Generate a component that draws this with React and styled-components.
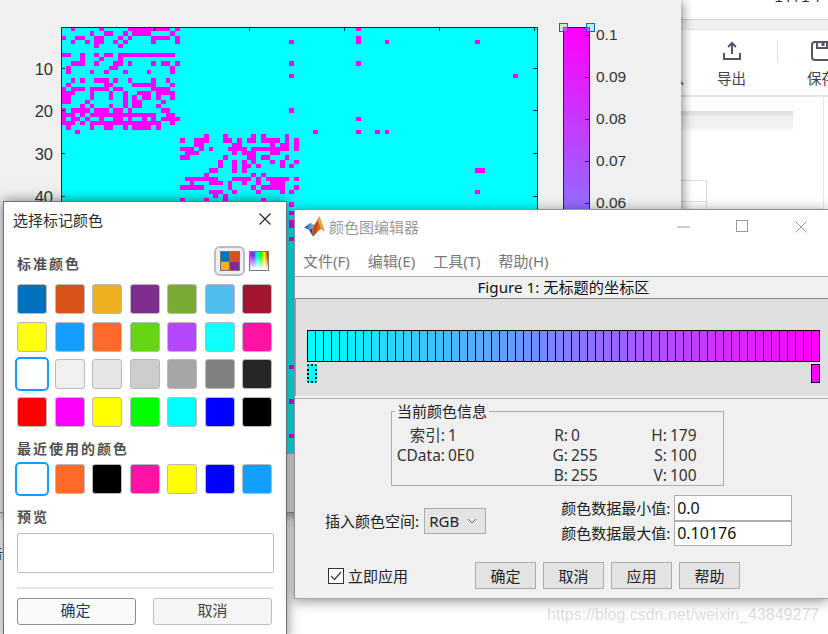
import React from "react";
import styled, { createGlobalStyle } from "styled-components";

const UI_FONT = `"Noto Sans", "Noto Sans CJK SC", sans-serif`;
const CJK_FONT = `"Noto Sans CJK SC", "Noto Sans", sans-serif`;

const GlobalStyle = createGlobalStyle`
  html, body {
    margin: 0;
    padding: 0;
    background: #fff;
  }
  * {
    box-sizing: border-box;
  }
`;

/* row number -> magenta columns of the sparse matrix */
const MATRIX = {
  1: "2 8 14-22 24 62",
  2: "6 9-10 13 15-18 23",
  3: "0 3-4 7-8 12 14 19-22 24 62",
  4: "2 5 7-8 11 13 19 24 48 62 68 87",
  5: "7 12",
  7: "0-1 4 7 9-10 12-23",
  8: "4 8 12",
  9: "2-4 7 11-12 14 19 21-22 24 48 62",
  10: "1 10-11 23",
  11: "1 6 9 13 18 23",
  12: "48 95",
  13: "2 4 7-9 11 14 19 22",
  14: "1 9-10 15-19 23",
  15: "0 2-4 6-9 11-12 19-22",
  16: "0-2 6 10 13 16-18 20-23",
  17: "0-1 6 10 13 15 17-18 20 23",
  18: "0-1 5 13 15-16 21",
  19: "4 6 10 13 15-16 20",
  20: "0 2-5 7-9 11-12 14 21-22 48",
  21: "0-2 4 6-19 22-23",
  22: "0 2-3 5 8 11-12 14 17 19 21-24 62",
  23: "0-2 4 6-20 23",
  24: "1 6 9-10 13 15-18 20",
  25: "3 53 62 66 68",
  26: "30 34 40 42 47",
  27: "25 28-30 34-35 37 39-40 42-45 47 49",
  28: "28-29 36-37 44 46-47 49",
  29: "25-27 29 31 35-38 40-47 49",
  30: "26-28 36 38-40 44-45",
  31: "25-26 34 39-40 42-43 47",
  32: "33 36 38 40 44 46 49",
  33: "33 36 38-39 41 46 48",
  34: "31-32 36 38 87-88",
  35: "30 40 42",
  36: "26-32 36-39 41 43-47 49",
  37: "27 31-33 35 38 41 44-46",
  38: "25-29 35 40 42-46 49",
  39: "31-33 36 41 46 48 87",
  40: "32 34",
  41: "25 30 34 42",
  42: "48",
  44: "48",
  46: "48",
  47: "48",
  50: "48",
  80: "48",
  88: "48",
  96: "48",
};

const CELL_W = 4.76;
const CELL_H = 4.28;
const PLOT_X = 61;
const PLOT_Y = 27;

const matrixCells = Object.entries(MATRIX).flatMap(([row, spec]) =>
  spec.split(" ").map((part) => {
    const [from, to = from] = part.split("-").map(Number);
    return { row: Number(row), from, span: to - from + 1 };
  })
);

const STANDARD_COLORS = [
  "#0072bd", "#d95319", "#edb120", "#7e2f8e", "#77ac30", "#4dbeee", "#a2142f",
  "#ffff11", "#139fff", "#ff6929", "#64d413", "#b746ff", "#0fffff", "#ff13a6",
  "#ffffff", "#f0f0f0", "#e6e6e6", "#cccccc", "#a6a6a6", "#808080", "#262626",
  "#ff0000", "#ff00ff", "#ffff00", "#00ff00", "#00ffff", "#0000ff", "#000000",
];
const RECENT_COLORS = ["#ffffff", "#ff6929", "#000000", "#ff13a6", "#ffff00", "#0000ff", "#139fff"];

const MAP_SIZE = 64;
const mapColor = (i) => {
  const t = i / (MAP_SIZE - 1);
  return `rgb(${Math.round(255 * t)}, ${Math.round(255 * (1 - t))}, 255)`;
};

const INFO_ROWS = [
  ["索引:", "1", "R:", "0", "H:", "179"],
  ["CData:", "0E0", "G:", "255", "S:", "100"],
  ["", "", "B:", "255", "V:", "100"],
];

const Desktop = styled.div`
  position: relative;
  width: 828px;
  height: 634px;
  overflow: hidden;
  background: #fff;
  font-family: ${UI_FONT};
`;

/* application behind the figure */
const BackApp = styled.div`
  position: absolute;
  left: 640px;
  top: 0;
  width: 188px;
  height: 634px;
  background: #fff;
  font-family: ${CJK_FONT};
`;

const TopStrip = styled.div`
  height: 20px;
  overflow: hidden;
  border-bottom: 1px solid #cfcfcf;
  text-align: right;
  padding-right: 6px;
  font: 15px "Liberation Sans", sans-serif;
  letter-spacing: 2px;
  color: #333;
  line-height: 1;

  span {
    display: block;
    margin-top: -11px;
  }
`;

const GreyBand = styled.div`
  height: 10px;
  background: #f1f1f1;
  border-bottom: 1px solid #e3e3e3;
`;

const Toolbar = styled.div`
  height: 67px;
  display: flex;
  border-bottom: 2px solid #e6e6e6;
`;

const ToolItem = styled.div`
  width: ${(p) => p.$width}px;
  margin-left: ${(p) => p.$offset || 0}px;
  flex: none;
  display: flex;
  flex-direction: column;
  align-items: center;
  justify-content: flex-end;
  height: 58px;
  color: #444;
  font-size: 14.5px;
  line-height: 20px;
  white-space: nowrap;

  svg {
    display: block;
    margin-bottom: 7px;
  }
`;

const ToolDivider = styled.div`
  width: 1px;
  height: 22px;
  margin-top: 10px;
  margin-left: 14px;
  margin-right: 14px;
  flex: none;
  background: #dedede;
`;

const BackContent = styled.div`
  width: 184px;
  height: 112px;
  border-right: 1px solid #e6e6e6;
  padding-top: 14px;
`;

const HeaderBar = styled.div`
  width: 153px;
  height: 20px;
  background: linear-gradient(#dfdfdf 0, #dfdfdf 15%, #f0f0f0 30%, #f0f0f0 70%, #fafafa 100%);
`;

const TableStub = styled.div`
  width: 67px;
  height: 40px;
  margin-top: 49px;
  border: 1px solid #dcdcdc;
  border-left: none;

  &::after {
    content: "";
    display: block;
    height: 20px;
    border-bottom: 1px solid #e2e2e2;
  }
`;

const CutGlyph = styled.div`
  position: absolute;
  left: -11px;
  top: 542px;
  font: 14px ${CJK_FONT};
  color: #333;
`;

/* MATLAB figure */
const FigureWindow = styled.div`
  position: absolute;
  left: 0;
  top: 0;
  width: 681px;
  height: 513px;
  background: #f0f0f0;
  border-bottom: 1px solid #9a9a9a;
  box-shadow: 2px 2px 10px rgba(0, 0, 0, 0.45);
`;

const FigureCanvas = styled.svg`
  display: block;

  text {
    font-family: "Liberation Sans", sans-serif;
    fill: #333;
  }
`;

/* marker colour dialog */
const Dialog = styled.div`
  position: absolute;
  left: 3px;
  top: 201px;
  width: 284px;
  height: 440px;
  background: #fff;
  border: 1px solid #6c7474;
  box-shadow: 0 0 12px rgba(0, 0, 0, 0.5);
  font-family: ${CJK_FONT};
  color: #333;
`;

const DialogTitleBar = styled.div`
  height: 38px;
  display: flex;
  align-items: center;
  justify-content: space-between;
  padding: 0 15px 4px 9px;
  font-size: 15px;
  color: #2c2c2c;
`;

const DialogBody = styled.div`
  padding-left: 13px;
`;

const SectionHead = styled.div`
  width: 255px;
  height: 30px;
  margin-top: 6px;
  padding-right: 3px;
  display: flex;
  align-items: flex-start;
  justify-content: space-between;
`;

const SectionLabel = styled.div`
  height: 20px;
  margin-top: ${(p) => p.$top || 0}px;
  line-height: 19px;
  font-size: 14px;
  font-weight: 700;
  letter-spacing: 2px;
  color: #505050;
  white-space: nowrap;
`;

const HeadLabel = styled(SectionLabel)`
  margin-top: 8px;
`;

const ModeGroup = styled.div`
  display: flex;
  align-items: center;
  gap: 4px;
`;

const ModeToggle = styled.div`
  width: 31px;
  height: 30px;
  display: flex;
  align-items: center;
  justify-content: center;
  border: 2px solid ${(p) => (p.$active ? "#bdbdbd" : "transparent")};
  background: ${(p) => (p.$active ? "#efefef" : "transparent")};
  border-radius: 6px;
`;

const PaletteIcon = styled.div`
  width: 20px;
  height: 20px;
  display: grid;
  grid-template-columns: 1fr 1fr;
  gap: 1px;
  border: 1px solid #777;
  background: #777;
`;

const PaletteQuad = styled.div`
  background: ${(p) => p.$color};
`;

const SpectrumIcon = styled.div`
  width: 20px;
  height: 20px;
  border: 1px solid #777;
  background: linear-gradient(rgba(255, 255, 255, 0) 20%, #fff 95%),
    linear-gradient(90deg, #f0f, #44f, #0ff, #0f0, #ff0, #f00);
`;

const SwatchGrid = styled.div`
  width: 255px;
  margin-top: ${(p) => p.$top}px;
  display: grid;
  grid-template-columns: repeat(7, 30px);
  grid-auto-rows: 30px;
  justify-content: space-between;
  row-gap: 7.6px;
`;

const Swatch = styled.div`
  background: ${(p) => p.$color};
  border: ${(p) => (p.$selected ? "none" : "1.5px solid #b9b9b9")};
  border-radius: 3px;
  outline: ${(p) => (p.$selected ? "2px solid #129cff" : "none")};
`;

const PreviewBox = styled.div`
  width: 257px;
  height: 40px;
  margin-top: 6px;
  background: #fff;
  border: 1.5px solid #bcbcbc;
  border-radius: 2px;
`;

const DialogDivider = styled.div`
  width: 257px;
  height: 2px;
  margin-top: 14px;
  background: #e6e6e6;
`;

const DialogActions = styled.div`
  width: 255px;
  margin-top: 9px;
  display: flex;
  gap: 17px;
`;

const DialogButton = styled.div`
  width: 119px;
  height: 27px;
  padding: 0 ${(p) => (p.$primary ? 2 : 0)}px 3px 0;
  display: flex;
  align-items: center;
  justify-content: center;
  border: 1.5px solid ${(p) => (p.$primary ? "#8e8e8e" : "#bcbcbc")};
  border-radius: 3px;
  background: ${(p) => (p.$primary ? "#fafafa" : "#f5f5f5")};
  color: ${(p) => (p.$primary ? "#1d3a63" : "#444")};
  font-size: 15px;
`;

/* colormap editor */
const EditorWindow = styled.div`
  position: absolute;
  left: 294px;
  top: 209px;
  width: 534px;
  height: 390px;
  background: #f0f0f0;
  border: 1px solid #8a9494;
  border-right: none;
  border-bottom-color: #a8a8a8;
  box-shadow: 0 2px 12px rgba(0, 0, 0, 0.45);
  color: #1a1a1a;
  font-size: 14px;
`;

const EditorTitleBar = styled.div`
  height: 38px;
  display: flex;
  align-items: center;
  padding: 0 0 5px 9px;
  background: #fff;
  font-family: ${CJK_FONT};
  font-size: 15px;
  color: #9a9a9a;
`;

const EditorTitle = styled.span`
  margin-left: 4px;
`;

const WindowControls = styled.div`
  margin-left: auto;
  margin-right: -2px;
  display: flex;
`;

const WindowControl = styled.div`
  width: 58.5px;
  height: 30px;
  display: flex;
  align-items: center;
  justify-content: center;
`;

const MenuBar = styled.div`
  height: 29px;
  display: flex;
  align-items: center;
  gap: 18px;
  padding: 0 0 3px 8px;
  background: #fff;
  border-bottom: 1px solid #ababab;
  color: #777;
  font-size: 15px;
  white-space: nowrap;
`;

const AxesName = styled.div`
  height: 22px;
  line-height: 20px;
  padding-left: 4px;
  text-align: center;
  border-bottom: 1px solid #8a8a8a;
  font-size: 15.2px;
  color: #111;
`;

const MapPanel = styled.div`
  height: 97px;
  padding: 31px 0 0 11px;
  background: #dfdfdf;
  border-left: 1px solid #9a9a9a;
`;

const MapStrip = styled.div`
  width: 513px;
  height: 32px;
  display: flex;
  border: 1px solid #000;
  border-left-width: 0;
  background: #000;
`;

const MapCell = styled.div`
  flex: 1;
  border-left: 1px solid #000;
`;

const MarkerRow = styled.div`
  width: 513px;
  margin-top: 2px;
  display: flex;
  justify-content: space-between;
`;

const Marker = styled.div`
  width: ${(p) => (p.$selected ? 10 : 9)}px;
  height: 19px;
  background: ${(p) => p.$color};
  border: ${(p) => (p.$selected ? "2px dotted #111" : "1px solid #000")};
  border-radius: ${(p) => (p.$selected ? "2px" : "0")};
`;

const PanelRule = styled.div`
  height: 1px;
  margin-top: 2px;
  background: #ababab;
`;

const InfoGroup = styled.fieldset`
  width: 333px;
  height: 84px;
  margin: 3px 0 0 96px;
  padding: 0;
  border: 1px solid #ababab;
`;

const InfoLegend = styled.legend`
  margin-left: 3px;
  padding: 0 2px;
  font-size: 15px;
  line-height: 18px;
  font-family: ${CJK_FONT};
  color: #222;
`;

const InfoGrid = styled.div`
  display: grid;
  grid-template-columns: 53px 99px 18px 75px 18px auto;
  grid-auto-rows: 20px;
  column-gap: 3px;
  padding-top: 5px;
  line-height: 20px;
  font-size: 15.5px;
  color: #333;
`;

const InfoLabel = styled.div`
  display: flex;
  justify-content: flex-end;
  white-space: nowrap;
`;

const LimitsRow = styled.div`
  margin-top: 9px;
  padding-left: 30px;
  display: flex;
  align-items: center;
  font-family: ${CJK_FONT};
`;

const FieldLabel = styled.div`
  white-space: nowrap;
  font-size: 15px;
  line-height: 20px;
  color: #222;
`;

const SpaceSelect = styled.div`
  width: 62px;
  height: 26px;
  margin-left: 5px;
  padding: 0 8px 0 4px;
  display: flex;
  align-items: center;
  justify-content: space-between;
  background: #e4e4e4;
  border: 1px solid #adadad;
  font-family: ${UI_FONT};
  font-size: 15px;
  color: #222;
`;

const LimitsGrid = styled.div`
  margin-left: 75px;
  display: grid;
  grid-template-columns: 109px 118px;
  grid-auto-rows: 25.5px;
  column-gap: 4px;
  align-items: center;
`;

const LimitInput = styled.input`
  width: 118px;
  height: 25.5px;
  padding: 0 2px;
  border: 1px solid #adadad;
  background: #fff;
  font-family: ${UI_FONT};
  font-size: 16px;
  color: #111;
  outline: none;
`;

const ActionRow = styled.div`
  margin-top: 16px;
  padding-left: 33px;
  display: flex;
  align-items: center;
  font-family: ${CJK_FONT};
`;

const ApplyCheck = styled.div`
  width: 147px;
  display: flex;
  align-items: center;
  gap: 4px;
  font-size: 15px;
  color: #222;
`;

const CheckBox = styled.div`
  width: 16px;
  height: 16px;
  border: 1px solid #333;
  background: #fff;
  display: flex;
  align-items: center;
  justify-content: center;
`;

const ActionButtons = styled.div`
  display: flex;
  gap: 7px;
`;

const ActionButton = styled.div`
  width: 61px;
  height: 27px;
  padding-bottom: 1px;
  display: flex;
  align-items: center;
  justify-content: center;
  background: #e3e3e3;
  border: 1px solid #adadad;
  font-size: 15px;
  color: #222;
`;

const Watermark = styled.div`
  position: absolute;
  left: 547px;
  top: 605px;
  font: 16px/20px "Liberation Sans", sans-serif;
  color: rgba(170, 170, 170, 0.42);
  white-space: nowrap;
`;

const ExportIcon = () => (
  <svg width="20" height="20" viewBox="0 0 20 20" fill="none" stroke="#555566" strokeWidth="2">
    <path d="M10 13V2M6 6l4-4 4 4" />
    <path d="M2 12v6h16v-6" />
    <path d="M12 15.5h4" stroke="#fff" strokeDasharray="1 1" />
  </svg>
);

const SaveIcon = () => (
  <svg width="22" height="20" viewBox="0 0 22 20" fill="none" stroke="#555566" strokeWidth="2">
    <rect x="1" y="1" width="20" height="18" rx="3" />
    <path d="M6 1v6h10V1" />
    <path d="M12 2v3" strokeWidth="3" />
  </svg>
);

const MatlabLogo = () => (
  <svg width="21" height="21" viewBox="0 0 21 21">
    <path d="M0 11.5 6.5 7 10 9.5 5 14z" fill="#2f6fb0" />
    <path d="M6.5 7l3.5 2.5L8 12.5 5 14l-1-1z" fill="#5aa5d8" />
    <path d="M5 14l3.5 -2L9 20.5z" fill="#1d4f86" />
    <path d="M10 9.5 15.5 0.5 20.5 15.5 17 13 13 16 9 20.5 8 12.5z" fill="#d9601c" />
    <path d="M15.5 0.5 20.5 15.5 17 13 14 5z" fill="#f0a040" />
    <path d="M10 9.5 14 5l-1 11-4 4.5z" fill="#c2481a" />
  </svg>
);

const CloseGlyph = ({ size, color, width }) => (
  <svg width={size} height={size} viewBox="0 0 12 12" stroke={color} strokeWidth={width} fill="none">
    <path d="M0.5 0.5 11.5 11.5M11.5 0.5 0.5 11.5" />
  </svg>
);

const Figure = () => (
  <FigureCanvas width="681" height="513">
    <defs>
      <linearGradient id="cbar" x1="0" y1="0" x2="0" y2="1">
        <stop offset="0" stopColor="#ff00ff" />
        <stop offset="1" stopColor="#00ffff" />
      </linearGradient>
    </defs>
    <rect x={PLOT_X} y={PLOT_Y} width="476" height="427" fill="#00ffff" />
    {matrixCells.map((c) => (
      <rect
        key={`${c.row}-${c.from}`}
        x={PLOT_X + c.from * CELL_W}
        y={PLOT_Y + (c.row - 1) * CELL_H}
        width={c.span * CELL_W}
        height={CELL_H}
        fill="#ff00ff"
        shapeRendering="crispEdges"
      />
    ))}
    <path d="M61.5 454V27.5H537.5V454" fill="none" stroke="#262626" strokeWidth="1" />
    {[10, 20, 30, 40].map((v) => {
      const y = Math.round(PLOT_Y + (v - 0.5) * CELL_H) + 0.5;
      return (
        <g key={v}>
          <path d={`M61 ${y}h4M537 ${y}h-4`} stroke="#262626" />
          <text x="53" y={y + 6} fontSize="16.5" textAnchor="end">
            {v}
          </text>
        </g>
      );
    })}
    {[154, 249, 344, 439, 534].map((x) => (
      <path key={x} d={`M${x + 0.5} 27v4`} stroke="#262626" />
    ))}
    <rect x="563.5" y="27.5" width="26" height="427" fill="url(#cbar)" stroke="#262626" />
    {["0.1", "0.09", "0.08", "0.07", "0.06"].map((label, i) => {
      const y = Math.round(34.5 + i * 42) + 0.5;
      return (
        <g key={label}>
          <path d={`M585 ${y}h4`} stroke="#262626" />
          <text x="596" y={y + 4.5} fontSize="15.5">
            {label}
          </text>
        </g>
      );
    })}
    {[559.5, 586.5].map((x) => (
      <rect key={x} x={x} y="23.5" width="8" height="8" fill="#8fd0f0" fillOpacity="0.4" stroke="#0072bd" />
    ))}
  </FigureCanvas>
);

export default function App() {
  return (
    <>
      <GlobalStyle />
      <Desktop>
        <BackApp>
          <TopStrip>
            <span>17/14</span>
          </TopStrip>
          <GreyBand />
          <Toolbar>
            <ToolItem $width={59}>导入</ToolItem>
            <ToolItem $width={62} $offset={1.5}>
              <ExportIcon />
              导出
            </ToolItem>
            <ToolDivider />
            <ToolItem $width={60}>
              <SaveIcon />
              保存
            </ToolItem>
          </Toolbar>
          <BackContent>
            <HeaderBar />
            <TableStub />
          </BackContent>
        </BackApp>
        <CutGlyph>告</CutGlyph>

        <FigureWindow>
          <Figure />
        </FigureWindow>

        <Dialog>
          <DialogTitleBar>
            选择标记颜色
            <CloseGlyph size={12} color="#222" width={1.1} />
          </DialogTitleBar>
          <DialogBody>
            <SectionHead>
              <HeadLabel>标准颜色</HeadLabel>
              <ModeGroup>
                <ModeToggle $active>
                  <PaletteIcon>
                    {STANDARD_COLORS.slice(0, 2).map((c) => (
                      <PaletteQuad key={c} $color={c} />
                    ))}
                    <PaletteQuad $color="#edb120" />
                    <PaletteQuad $color="#7e2f8e" />
                  </PaletteIcon>
                </ModeToggle>
                <SpectrumIcon />
              </ModeGroup>
            </SectionHead>
            <SwatchGrid $top={8}>
              {STANDARD_COLORS.map((c, i) => (
                <Swatch key={i} $color={c} $selected={i === 14} />
              ))}
            </SwatchGrid>
            <SectionLabel $top={12}>最近使用的颜色</SectionLabel>
            <SwatchGrid $top={5}>
              {RECENT_COLORS.map((c, i) => (
                <Swatch key={i} $color={c} $selected={i === 0} />
              ))}
            </SwatchGrid>
            <SectionLabel $top={13}>预览</SectionLabel>
            <PreviewBox />
            <DialogDivider />
            <DialogActions>
              <DialogButton $primary>确定</DialogButton>
              <DialogButton>取消</DialogButton>
            </DialogActions>
          </DialogBody>
        </Dialog>

        <EditorWindow>
          <EditorTitleBar>
            <MatlabLogo />
            <EditorTitle>颜色图编辑器</EditorTitle>
            <WindowControls>
              <WindowControl>
                <svg width="13" height="2">
                  <path d="M0 1h13" stroke="#999" />
                </svg>
              </WindowControl>
              <WindowControl>
                <svg width="13" height="13">
                  <rect x="0.5" y="0.5" width="11" height="11" fill="none" stroke="#999" />
                </svg>
              </WindowControl>
              <WindowControl>
                <CloseGlyph size={12} color="#999" width={1} />
              </WindowControl>
            </WindowControls>
          </EditorTitleBar>
          <MenuBar>
            <span>文件(F)</span>
            <span>编辑(E)</span>
            <span>工具(T)</span>
            <span>帮助(H)</span>
          </MenuBar>
          <AxesName>Figure 1: 无标题的坐标区</AxesName>
          <MapPanel>
            <MapStrip>
              {Array.from({ length: MAP_SIZE }, (_, i) => (
                <MapCell key={i} style={{ background: mapColor(i) }} />
              ))}
            </MapStrip>
            <MarkerRow>
              <Marker $color="#00ffff" $selected />
              <Marker $color="#ff00ff" />
            </MarkerRow>
          </MapPanel>
          <PanelRule />
          <InfoGroup>
            <InfoLegend>当前颜色信息</InfoLegend>
            <InfoGrid>
              {INFO_ROWS.flat().map((text, i) =>
                i % 2 === 0 ? <InfoLabel key={i}>{text}</InfoLabel> : <div key={i}>{text}</div>
              )}
            </InfoGrid>
          </InfoGroup>
          <LimitsRow>
            <FieldLabel>插入颜色空间:</FieldLabel>
            <SpaceSelect>
              RGB
              <svg width="10" height="6" fill="none" stroke="#666">
                <path d="M1 1l4 4 4-4" />
              </svg>
            </SpaceSelect>
            <LimitsGrid>
              <FieldLabel>颜色数据最小值:</FieldLabel>
              <LimitInput readOnly value="0.0" />
              <FieldLabel>颜色数据最大值:</FieldLabel>
              <LimitInput readOnly value="0.10176" />
            </LimitsGrid>
          </LimitsRow>
          <ActionRow>
            <ApplyCheck>
              <CheckBox>
                <svg width="12" height="10" fill="none" stroke="#444" strokeWidth="1.4">
                  <path d="M1 5l3.5 3.5L11 1" />
                </svg>
              </CheckBox>
              立即应用
            </ApplyCheck>
            <ActionButtons>
              <ActionButton>确定</ActionButton>
              <ActionButton>取消</ActionButton>
              <ActionButton>应用</ActionButton>
              <ActionButton>帮助</ActionButton>
            </ActionButtons>
          </ActionRow>
        </EditorWindow>

        <Watermark>https://blog.csdn.net/weixin_43849277</Watermark>
      </Desktop>
    </>
  );
}
